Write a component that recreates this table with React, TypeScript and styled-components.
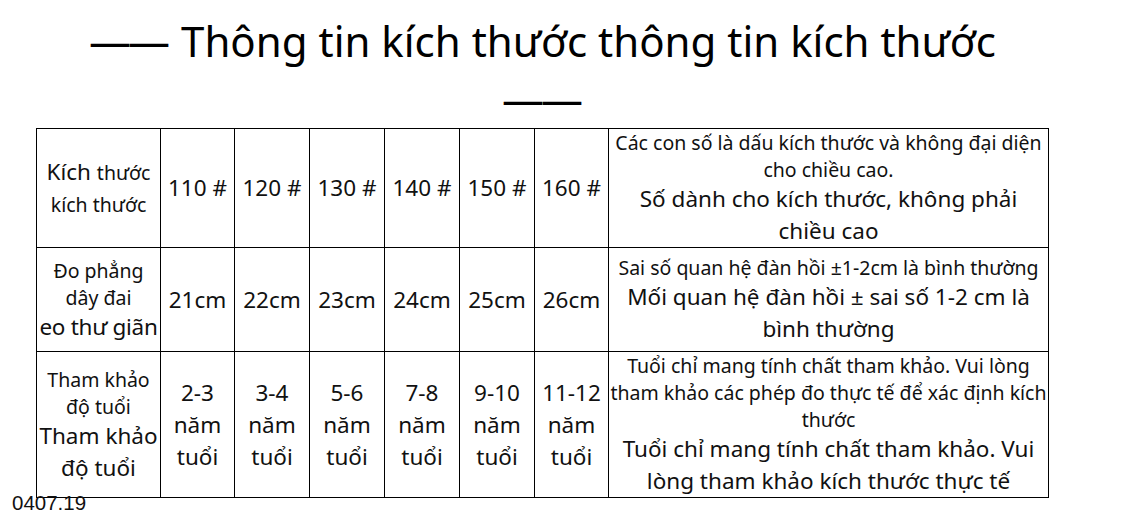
import React from "react";
import styled, { createGlobalStyle } from "styled-components";

const GlobalStyle = createGlobalStyle`
  html, body {
    margin: 0;
    padding: 0;
    background: #ffffff;
  }
  body {
    font-family: "Noto Sans", "Open Sans", sans-serif;
    color: #111111;
  }
`;

const Page = styled.div`
  position: relative;
  width: 1124px;
  height: 521px;
  overflow: hidden;
  padding: 0 0 0 36px;
  box-sizing: border-box;
`;

const Title = styled.h1`
  width: 1013px;
  height: 128px;
  margin: 0;
  padding-top: 12px;
  box-sizing: border-box;
  font-family: "Noto Sans", sans-serif;
  font-weight: 400;
  font-size: 42px;
  line-height: 58px;
  text-align: center;
  color: #000000;
`;

const Dash = styled.span`
  letter-spacing: -3px;
  margin-right: 3px;
`;

const Table = styled.table`
  border-collapse: collapse;
  table-layout: fixed;
  width: 1013px;
  color: #111111;
`;

const Row = styled.tr<{ h: number }>`
  height: ${({ h }) => h}px;
`;

const Cell = styled.td`
  border: 1px solid #000000;
  padding: 0 1px;
  text-align: center;
  vertical-align: middle;
  font-size: 22.5px;
  line-height: 32px;
`;

const Small = styled.span`
  font-size: 19.5px;
  line-height: 27px;
`;

const Block = styled.div<{ big?: boolean; nowrap?: boolean }>`
  font-size: ${({ big }) => (big ? "22.5px" : "19.5px")};
  line-height: ${({ big }) => (big ? "32px" : "27px")};
  white-space: ${({ nowrap }) => (nowrap ? "nowrap" : "normal")};
  letter-spacing: ${({ nowrap }) => (nowrap ? "-0.3px" : "normal")};
`;

const Stamp = styled.div`
  position: absolute;
  left: 12px;
  top: 491px;
  font-family: "Liberation Sans", Arial, sans-serif;
  font-size: 20.5px;
  line-height: 24px;
  color: #111111;
`;

const widths = [124, 74, 75, 75, 75, 75, 74, 440];

const sizes = ["110 #", "120 #", "130 #", "140 #", "150 #", "160 #"];
const waists = ["21cm", "22cm", "23cm", "24cm", "25cm", "26cm"];
const ages = ["2-3", "3-4", "5-6", "7-8", "9-10", "11-12"];

export default function App() {
  return (
    <Page>
      <GlobalStyle />
      <Title>
        <Dash>——</Dash> Thông tin kích thước thông tin kích thước
        <br />
        <Dash>——</Dash>
      </Title>
      <Table>
        <colgroup>
          {widths.map((w, i) => (
            <col key={i} style={{ width: w }} />
          ))}
        </colgroup>
        <tbody>
          <Row h={119}>
            <Cell>
              Kích <Small>thước</Small>
              <br />
              <Small>kích thước</Small>
            </Cell>
            {sizes.map((s) => (
              <Cell key={s}>{s}</Cell>
            ))}
            <Cell>
              <Block>Các con số là dấu kích thước và không đại diện cho chiều cao.</Block>
              <Block big>Số dành cho kích thước, không phải chiều cao</Block>
            </Cell>
          </Row>
          <Row h={104}>
            <Cell>
              <Block>Đo phẳng</Block>
              <Block>dây đai</Block>
              <Block big nowrap>
                eo thư giãn
              </Block>
            </Cell>
            {waists.map((s) => (
              <Cell key={s}>{s}</Cell>
            ))}
            <Cell>
              <Block>Sai số quan hệ đàn hồi ±1-2cm là bình thường</Block>
              <Block big>Mối quan hệ đàn hồi ± sai số 1-2 cm là bình thường</Block>
            </Cell>
          </Row>
          <Row h={146}>
            <Cell>
              <Block>Tham khảo độ tuổi</Block>
              <Block big>Tham khảo độ tuổi</Block>
            </Cell>
            {ages.map((s) => (
              <Cell key={s}>
                {s}
                <br />
                năm
                <br />
                tuổi
              </Cell>
            ))}
            <Cell>
              <Block>
                Tuổi chỉ mang tính chất tham khảo. Vui lòng tham khảo các phép đo thực tế để xác định kích thước
              </Block>
              <Block big>Tuổi chỉ mang tính chất tham khảo. Vui lòng tham khảo kích thước thực tế</Block>
            </Cell>
          </Row>
        </tbody>
      </Table>
      <Stamp>0407.19</Stamp>
    </Page>
  );
}
